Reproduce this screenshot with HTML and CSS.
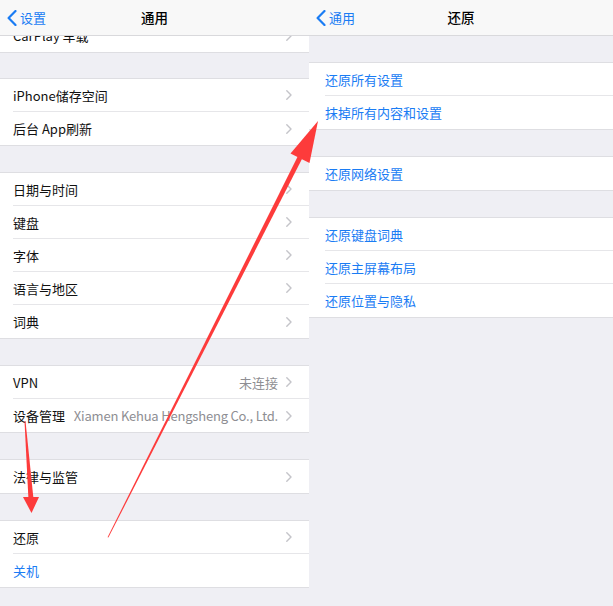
FILE: index.html
```html
<!DOCTYPE html>
<html lang="zh-CN">
<head>
<meta charset="utf-8">
<title>通用 / 还原</title>
<link rel="stylesheet" href="styles.css">
</head>
<body>
<div class="screen">
  <section class="panel panel-left">
    <header class="navbar">
      <a class="back">
        <svg class="back-chevron" width="10" height="16" viewBox="0 0 10 16"><polyline points="8.5,1 1.6,8 8.5,15" fill="none" stroke="#1a7cf4" stroke-width="2.2" stroke-linecap="round" stroke-linejoin="round"/></svg>
        <span>设置</span>
      </a>
      <h1 class="title">通用</h1>
      <span></span>
    </header>
    <div class="content">
      <div class="group group-cut">
        <div class="row"><div class="cell"><span class="label">CarPlay 车载</span><svg class="chev" width="6" height="10" viewBox="0 0 6 10"><polyline points="0.8,0.8 5,5 0.8,9.2"/></svg></div></div>
      </div>
      <div class="group">
        <div class="row"><div class="cell"><span class="label">iPhone储存空间</span><svg class="chev" width="6" height="10" viewBox="0 0 6 10"><polyline points="0.8,0.8 5,5 0.8,9.2"/></svg></div></div>
        <div class="row"><div class="cell"><span class="label">后台 App刷新</span><svg class="chev" width="6" height="10" viewBox="0 0 6 10"><polyline points="0.8,0.8 5,5 0.8,9.2"/></svg></div></div>
      </div>
      <div class="group">
        <div class="row"><div class="cell"><span class="label">日期与时间</span><svg class="chev" width="6" height="10" viewBox="0 0 6 10"><polyline points="0.8,0.8 5,5 0.8,9.2"/></svg></div></div>
        <div class="row"><div class="cell"><span class="label">键盘</span><svg class="chev" width="6" height="10" viewBox="0 0 6 10"><polyline points="0.8,0.8 5,5 0.8,9.2"/></svg></div></div>
        <div class="row"><div class="cell"><span class="label">字体</span><svg class="chev" width="6" height="10" viewBox="0 0 6 10"><polyline points="0.8,0.8 5,5 0.8,9.2"/></svg></div></div>
        <div class="row"><div class="cell"><span class="label">语言与地区</span><svg class="chev" width="6" height="10" viewBox="0 0 6 10"><polyline points="0.8,0.8 5,5 0.8,9.2"/></svg></div></div>
        <div class="row"><div class="cell"><span class="label">词典</span><svg class="chev" width="6" height="10" viewBox="0 0 6 10"><polyline points="0.8,0.8 5,5 0.8,9.2"/></svg></div></div>
      </div>
      <div class="group">
        <div class="row"><div class="cell"><span class="label">VPN</span><span class="detail">未连接</span><svg class="chev" width="6" height="10" viewBox="0 0 6 10"><polyline points="0.8,0.8 5,5 0.8,9.2"/></svg></div></div>
        <div class="row"><div class="cell"><span class="label">设备管理</span><span class="detail detail-tight">Xiamen Kehua Hengsheng Co., Ltd.</span><svg class="chev" width="6" height="10" viewBox="0 0 6 10"><polyline points="0.8,0.8 5,5 0.8,9.2"/></svg></div></div>
      </div>
      <div class="group">
        <div class="row"><div class="cell"><span class="label">法律与监管</span><svg class="chev" width="6" height="10" viewBox="0 0 6 10"><polyline points="0.8,0.8 5,5 0.8,9.2"/></svg></div></div>
      </div>
      <div class="group">
        <div class="row"><div class="cell"><span class="label">还原</span><svg class="chev" width="6" height="10" viewBox="0 0 6 10"><polyline points="0.8,0.8 5,5 0.8,9.2"/></svg></div></div>
        <div class="row"><div class="cell"><span class="label link">关机</span></div></div>
      </div>
    </div>
  </section>

  <section class="panel panel-right">
    <header class="navbar">
      <a class="back">
        <svg class="back-chevron" width="10" height="16" viewBox="0 0 10 16"><polyline points="8.5,1 1.6,8 8.5,15" fill="none" stroke="#1a7cf4" stroke-width="2.2" stroke-linecap="round" stroke-linejoin="round"/></svg>
        <span>通用</span>
      </a>
      <h1 class="title">还原</h1>
      <span></span>
    </header>
    <div class="content">
      <div class="group">
        <div class="row"><div class="cell"><span class="label link">还原所有设置</span></div></div>
        <div class="row"><div class="cell"><span class="label link">抹掉所有内容和设置</span></div></div>
      </div>
      <div class="group">
        <div class="row"><div class="cell"><span class="label link">还原网络设置</span></div></div>
      </div>
      <div class="group">
        <div class="row"><div class="cell"><span class="label link">还原键盘词典</span></div></div>
        <div class="row"><div class="cell"><span class="label link">还原主屏幕布局</span></div></div>
        <div class="row"><div class="cell"><span class="label link">还原位置与隐私</span></div></div>
      </div>
    </div>
  </section>

  <svg class="annotations" width="613" height="606" viewBox="0 0 613 606">
    <polygon class="arrow" points="107.6,537.2 108.4,537.6 302.1,158.8 297.7,156.6"/>
    <polygon class="arrow" points="318,121 309.5,163 290.5,153.5"/>
    <polygon class="arrow" points="24.5,421 25.5,421 33.4,498 28.4,498"/>
    <polygon class="arrow" points="23,497 39,497 31.5,513"/>
  </svg>
</div>
</body>
</html>
```

FILE: styles.css
```css
* {
  box-sizing: border-box;
}

html, body {
  margin: 0;
  padding: 0;
}

body {
  width: 613px;
  height: 606px;
  overflow: hidden;
  background: #efeff4;
  font-family: "Noto Sans CJK SC", "Noto Sans", sans-serif;
  font-size: 13px;
  color: #111;
}

.screen {
  position: relative;
  display: flex;
  width: 613px;
  height: 606px;
}

.panel {
  display: flex;
  flex-direction: column;
  height: 100%;
  background: #efeff4;
}

.panel-left {
  width: 309px;
}

.panel-right {
  flex: 1;
}

.navbar {
  height: 36px;
  flex: none;
  display: grid;
  grid-template-columns: 1fr auto 1fr;
  align-items: center;
  background: #f8f8f8;
  border-bottom: 1px solid #d9d9dc;
  position: relative;
  z-index: 1;
}

.back {
  display: flex;
  align-items: center;
  gap: 3px;
  padding-left: 7px;
  color: #1a7cf4;
  font-size: 13px;
  line-height: 1;
}

.back-chevron {
  display: block;
}

.title {
  margin: 0;
  font-size: 13.5px;
  font-weight: 500;
  color: #000;
  line-height: 1;
}

.content {
  flex: 1;
  overflow: hidden;
  padding-top: 26px;
}

.panel-left .content {
  padding-top: 0;
}

.group {
  background: #fff;
  border-top: 1px solid #dedee2;
  border-bottom: 1px solid #dedee2;
  margin-bottom: 26px;
}

.group-cut {
  border-top: 0;
  margin-top: -17px;
  margin-bottom: 25px;
}

.row {
  height: 33px;
  padding-left: 13px;
  display: flex;
}

.panel-right .row {
  padding-left: 16px;
}

.cell {
  flex: 1;
  display: flex;
  align-items: center;
  padding-right: 17px;
  border-bottom: 1px solid #e6e6e9;
  white-space: nowrap;
  min-width: 0;
}

.row:last-child .cell {
  border-bottom: 0;
}

.label {
  line-height: 1;
}

.link {
  color: #1a7cf4;
}

.detail {
  margin-left: auto;
  margin-right: 8px;
  color: #8e8e93;
  line-height: 1;
}

.detail-tight {
  letter-spacing: -0.2px;
}

.chev {
  margin-left: auto;
  flex: none;
  display: block;
}

.detail + .chev {
  margin-left: 0;
}

.chev polyline {
  fill: none;
  stroke: #c4c4c9;
  stroke-width: 1.4;
  stroke-linecap: round;
  stroke-linejoin: round;
}

.annotations {
  position: absolute;
  left: 0;
  top: 0;
  pointer-events: none;
  z-index: 2;
}

.arrow {
  fill: #fd3b3b;
}
```
